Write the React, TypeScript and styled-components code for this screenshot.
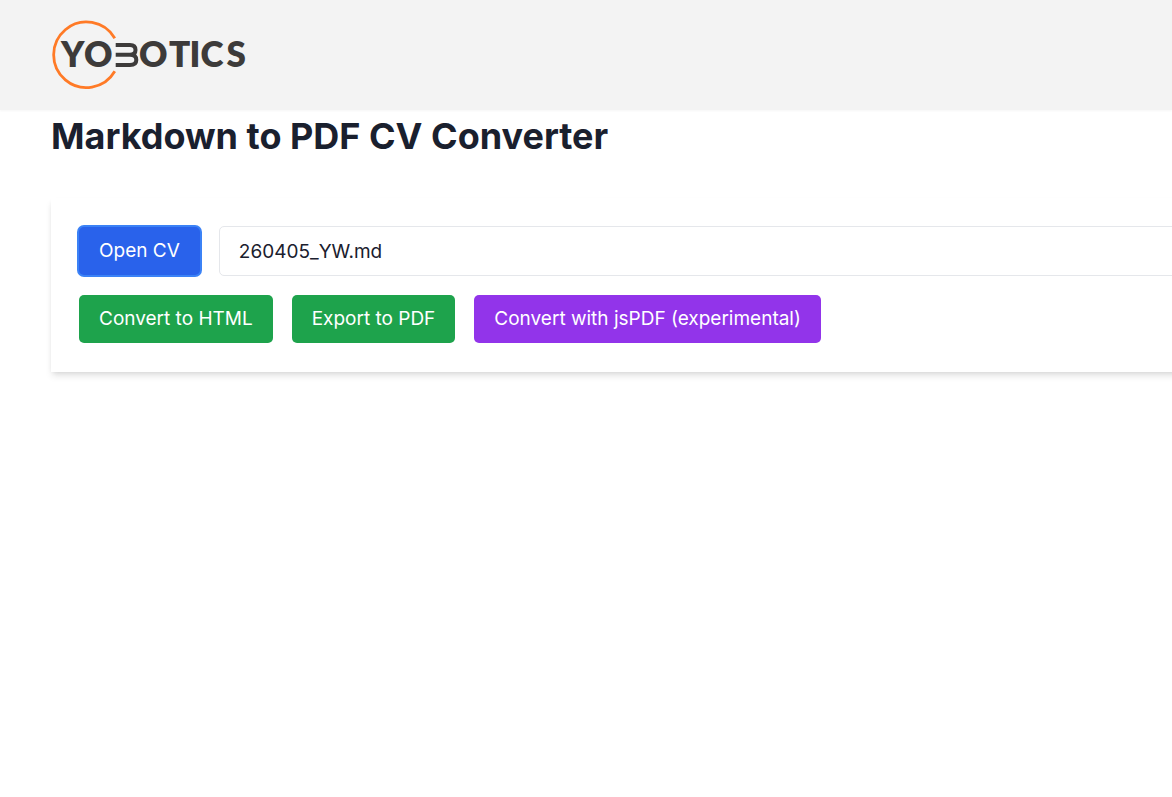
import React from 'react';
import styled, { createGlobalStyle } from 'styled-components';

const GlobalStyle = createGlobalStyle`
  *, *::before, *::after { box-sizing: border-box; }
  body {
    margin: 0;
    background: #fff;
    color: #1a202e;
    font-family: Inter, "Liberation Sans", sans-serif;
  }
`;

const Page = styled.div`
  min-height: 100vh;
  overflow-x: hidden;
`;

const Header = styled.header`
  display: flex;
  align-items: center;
  height: 110px;
  padding: 0 51px;
  background: #f3f3f3;
  box-shadow: 0 1px 2px rgba(0, 0, 0, 0.04);
`;

const LogoLink = styled.a`
  display: block;
  line-height: 0;
`;

const Wordmark = styled.text`
  font-family: Lato, Inter, sans-serif;
  font-size: 35px;
  font-weight: 800;
  fill: #3d3b3a;
`;

const Main = styled.main`
  padding: 4px 0 48px 51px;
`;

const Title = styled.h1`
  margin: 0 0 40px;
  font-size: 36px;
  line-height: 44px;
  font-weight: 700;
  white-space: nowrap;
`;

/* The panel runs past the right edge of the window. */
const Card = styled.section`
  display: flex;
  flex-direction: column;
  gap: 19px;
  width: calc(100% + 51px);
  padding: 28px 28px 29px;
  background: #fff;
  box-shadow: 0 5px 7px -1px rgba(0, 0, 0, 0.1), 0 2px 5px -2px rgba(0, 0, 0, 0.1);
`;

const Row = styled.div`
  display: flex;
  align-items: center;
  gap: 19px;
`;

const Button = styled.button<{ $color: string; $ring?: boolean }>`
  flex: none;
  height: 48px;
  padding: 0 20px;
  border: 0;
  border-radius: 5px;
  background: ${({ $color }) => $color};
  box-shadow: ${({ $ring }) => ($ring ? '0 0 0 2px #3b82f6' : 'none')};
  color: #fff;
  font: inherit;
  font-size: 19px;
  line-height: 28px;
  white-space: nowrap;
  cursor: pointer;
`;

const FileName = styled.input`
  flex: 1;
  min-width: 0;
  height: 50px;
  padding: 0 19px;
  border: 1px solid #e5e7eb;
  border-radius: 5px;
  background: #fff;
  color: inherit;
  font: inherit;
  font-size: 19px;
  outline: 0;
`;

function Logo() {
  return (
    <svg width="200" height="72" viewBox="0 0 200 72" role="img" aria-label="Yobotics">
      <path d="M63.8 19.3 A32.8 32.8 0 1 0 63.8 52.3" fill="none" stroke="#ff7a26" strokeWidth="2.8" />
      <Wordmark x="10 33" y="48">YO</Wordmark>
      <path
        d="M64.7 26 H79 Q84.5 26 84.5 31 Q84.5 35.8 79 35.8 H64.7 M79 35.8 Q85.3 35.8 85.3 41 Q85.3 46 79 46 H64.7"
        fill="none"
        stroke="#3d3b3a"
        strokeWidth="4"
      />
      <Wordmark x="88 118 138.5 149.5 175.5" y="48">OTICS</Wordmark>
    </svg>
  );
}

export default function App() {
  return (
    <>
      <GlobalStyle />
      <Page>
        <Header>
          <LogoLink href="#" aria-label="Yobotics home">
            <Logo />
          </LogoLink>
        </Header>
        <Main>
          <Title>Markdown to PDF CV Converter</Title>
          <Card>
            <Row>
              <Button type="button" $color="#2962eb" $ring>Open CV</Button>
              <FileName type="text" aria-label="Selected file" defaultValue="260405_YW.md" />
            </Row>
            <Row>
              <Button type="button" $color="#1ea34c">Convert to HTML</Button>
              <Button type="button" $color="#1ea34c">Export to PDF</Button>
              <Button type="button" $color="#9234ea">Convert with jsPDF (experimental)</Button>
            </Row>
          </Card>
        </Main>
      </Page>
    </>
  );
}
